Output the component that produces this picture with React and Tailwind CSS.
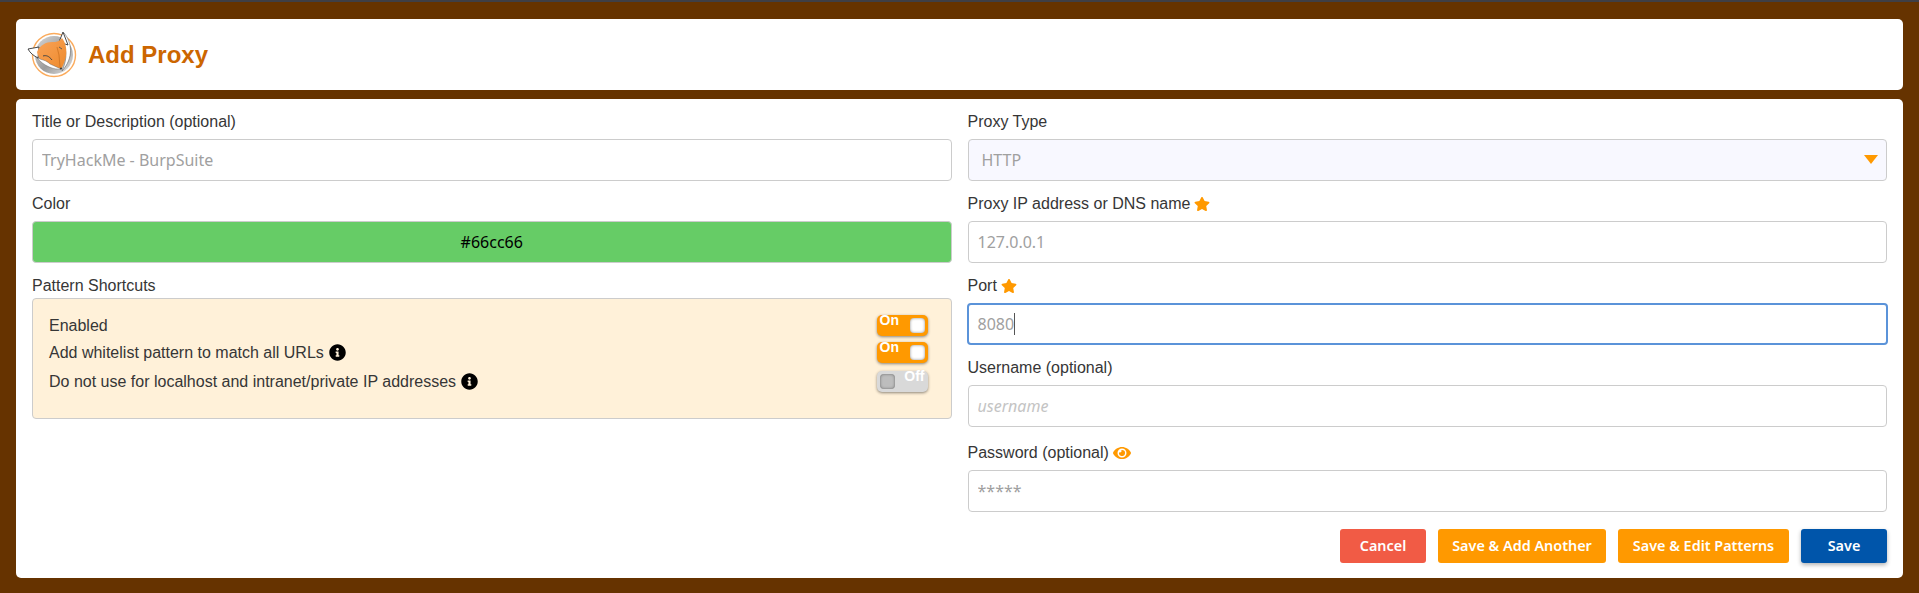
import { FaStar, FaInfoCircle, FaEye } from "react-icons/fa";

const sans = "font-['Liberation_Sans',Arial,sans-serif]";
const noto = "font-['Noto_Sans',sans-serif]";

const FoxLogo = () => (
    <svg viewBox="26 29 54 52" className="w-[54px] h-[52px] shrink-0">
        <defs>
            <linearGradient id="ringFill" x1="0" y1="0" x2="1" y2="1">
                <stop offset="0" stopColor="#d8d8d8" />
                <stop offset="0.55" stopColor="#9c9c9c" />
                <stop offset="1" stopColor="#e4e4e4" />
            </linearGradient>
            <linearGradient id="headFill" x1="0" y1="0" x2="1" y2="1">
                <stop offset="0" stopColor="#f9a45a" />
                <stop offset="1" stopColor="#ee8a2c" />
            </linearGradient>
        </defs>
        <circle cx="54" cy="55" r="21.5" fill="#fff" stroke="#fbab5c" strokeWidth="1.4" />
        <circle cx="54" cy="55" r="19" fill="url(#ringFill)" />
        {/* right side swoosh */}
        <path d="M64 33 C72 42 74 58 62 71 C68 58 67 46 60 40 Z" fill="#fff" stroke="#555" strokeWidth="0.5" />
        {/* ears */}
        <path d="M28 49 L39 47 L38 58 C34 56 30 53 28 49 Z" fill="#fff" stroke="#333" strokeWidth="0.9" />
        <path d="M63 32 L68 45 L59 42 Z" fill="#fff" stroke="#333" strokeWidth="0.9" />
        {/* head */}
        <path d="M37 52 C40 45 46 42 52 42 C56 42 59 42 62 38 C66 43 67 50 66 56 C65 61 63 66 61 69 C56 67 50 66 46 63 C41 61 38 57 37 52 Z" fill="url(#headFill)" />
        <path d="M37 58 C42 60 46 60 50 64 L61 69 C54 70 44 66 37 58 Z" fill="#fff" stroke="#555" strokeWidth="0.4" />
        {/* eyes and muzzle */}
        <path d="M43 56 C46 55 49 56 52 60" stroke="#444" strokeWidth="1" fill="none" />
        <path d="M59 47 L62 49" stroke="#555" strokeWidth="0.9" fill="none" />
        <path d="M57 47 L59 55 L60 67" stroke="#c96f1e" strokeWidth="0.7" fill="none" />
        <circle cx="61" cy="68.5" r="1" fill="#333" />
    </svg>
);

const Label = ({ children, className = "" }) => (
    <label className={`flex items-center gap-[4px] h-[18px] text-[16px] leading-[18px] text-[#363636] ${sans} ${className}`}>
        {children}
    </label>
);

const Field = ({ placeholder, italic }) => (
    <input
        readOnly
        placeholder={placeholder}
        className={`block w-full h-[42px] px-[9px] bg-white border border-[#cccccc] rounded-[4px] text-[16px] outline-none ${noto} ${
            italic ? "italic placeholder:text-[#c4c4c4]" : "placeholder:text-[#a0a0a0]"
        }`}
    />
);

const Toggle = ({ on }) => (
    <div
        className={`flex justify-between w-[51px] h-[21px] px-[3px] rounded-[5px] shadow-[0_1px_3px_rgba(0,0,0,0.45)] text-[14px] leading-[13px] font-bold text-white ${sans} ${
            on ? "bg-[#ff9900]" : "bg-[#d9d9d9] flex-row-reverse"
        }`}
    >
        <span className="-mt-[1px]">{on ? "On" : "Off"}</span>
        <span
            className={`mt-[3px] w-[15px] h-[15px] rounded-[4px] shadow-[inset_0_0_3px_rgba(0,0,0,0.45)] ${
                on ? "bg-white" : "bg-[#bdbdbd]"
            }`}
        />
    </div>
);

const Row = ({ children, on, className = "" }) => (
    <div className={`flex items-center justify-between pr-[23px] text-[16px] leading-[20px] text-[#363636] ${sans} ${className}`}>
        <span className="flex items-center gap-[5px]">{children}</span>
        <Toggle on={on} />
    </div>
);

const Btn = ({ children, className }) => (
    <button className={`h-[34px] rounded-[3px] text-[14.4px] font-semibold text-white ${noto} ${className}`}>
        {children}
    </button>
);

export default function App() {
    return (
        <div className="min-h-[593px] bg-[#663300] px-[16px] pb-[15px]">
            <div className="h-[2px] -mx-[16px] bg-[#3f3f46]" />

            {/* Header */}
            <div className="mt-[17px] h-[71px] flex items-center gap-[8px] pl-[10px] bg-white rounded-[5px]">
                <FoxLogo />
                <h1 className={`text-[24px] font-bold text-[#cc6600] ${sans}`}>Add Proxy</h1>
            </div>

            {/* Form */}
            <div className="mt-[9px] h-[479px] bg-white rounded-[5px] px-[16px] pt-[14px] grid grid-cols-2 gap-x-[16px]">
                <div>
                    <Label>Title or Description (optional)</Label>
                    <div className="mt-[8px]">
                        <Field placeholder="TryHackMe - BurpSuite" />
                    </div>

                    <Label className="mt-[14px]">Color</Label>
                    <div className={`mt-[8px] h-[42px] flex items-center justify-center bg-[#66cc66] border border-[#cccccc] rounded-[4px] text-[16px] text-black ${noto}`}>
                        #66cc66
                    </div>

                    <Label className="mt-[14px]">Pattern Shortcuts</Label>
                    <div className="mt-[3px] h-[121px] pt-[16px] pl-[16px] bg-[#fff1d9] border border-[#cccccc] rounded-[4px]">
                        <Row on>Enabled</Row>
                        <Row on className="mt-[6px]">
                            Add whitelist pattern to match all URLs
                            <FaInfoCircle className="text-[17px] text-black" />
                        </Row>
                        <Row className="mt-[8px]">
                            Do not use for localhost and intranet/private IP addresses
                            <FaInfoCircle className="text-[17px] text-black" />
                        </Row>
                    </div>
                </div>

                <div>
                    <Label>Proxy Type</Label>
                    <div className={`relative mt-[8px] h-[42px] flex items-center pl-[13px] bg-[#f8f8ff] border border-[#cccccc] rounded-[4px] text-[16px] text-[#a0a0a0] ${noto}`}>
                        HTTP
                        <div className="absolute right-[8px] top-[15px] w-0 h-0 border-x-[7px] border-x-transparent border-t-[9px] border-t-[#ff9900]" />
                    </div>

                    <Label className="mt-[14px]">
                        Proxy IP address or DNS name
                        <FaStar className="text-[16px] text-[#ff9900]" />
                    </Label>
                    <div className="mt-[8px]">
                        <Field placeholder="127.0.0.1" />
                    </div>

                    <Label className="mt-[14px]">
                        Port
                        <FaStar className="text-[16px] text-[#ff9900]" />
                    </Label>
                    <div className={`mt-[8px] h-[42px] flex items-center px-[9px] bg-white border-2 border-[#5b93d9] rounded-[4px] -mx-[1px] text-[16px] text-[#a0a0a0] ${noto}`}>
                        8080
                        <span className="w-[1px] h-[22px] bg-[#555555]" />
                    </div>

                    <Label className="mt-[14px]">Username (optional)</Label>
                    <div className="mt-[8px]">
                        <Field placeholder="username" italic />
                    </div>

                    <Label className="mt-[17px]">
                        Password (optional)
                        <FaEye className="text-[18px] text-[#ff9900]" />
                    </Label>
                    <div className="mt-[8px]">
                        <Field placeholder="*****" />
                    </div>

                    <div className="mt-[17px] flex justify-end gap-[12px]">
                        <Btn className="w-[86px] bg-[#f15b45]">Cancel</Btn>
                        <Btn className="w-[168px] bg-[#ff9900]">Save &amp; Add Another</Btn>
                        <Btn className="w-[171px] bg-[#ff9900]">Save &amp; Edit Patterns</Btn>
                        <Btn className="w-[86px] bg-[#0055aa] shadow-[0_2px_4px_rgba(0,0,0,0.3)]">Save</Btn>
                    </div>
                </div>
            </div>
        </div>
    );
}
